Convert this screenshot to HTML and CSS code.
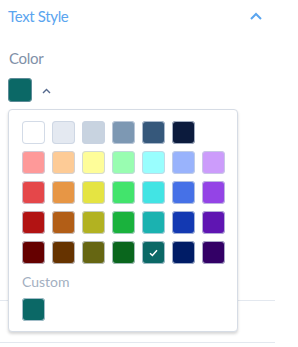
FILE: index.html
```html
<!DOCTYPE html>
<html>
<head>
<meta charset="utf-8">
<link rel="stylesheet" href="styles.css">
</head>
<body>
<div class="panel">
  <div class="section-head">
    <span class="section-title">Text Style</span>
    <svg class="chev-blue" width="12" height="8" viewBox="0 0 12 8"><path d="M1 7 L6 2 L11 7" fill="none" stroke="#5aa5ef" stroke-width="2"/></svg>
  </div>
  <div class="field">
    <div class="field-label">Color</div>
    <div class="picker">
      <span class="swatch current"></span>
      <svg class="chev-small" width="9" height="6" viewBox="0 0 9 6"><path d="M1 5 L4.5 1.5 L8 5" fill="none" stroke="#54698d" stroke-width="1.4"/></svg>
      <div class="popover">
        <div class="grid">
          <span class="swatch" style="background:#ffffff"></span>
          <span class="swatch" style="background:#e4e9f1"></span>
          <span class="swatch" style="background:#c8d3e0"></span>
          <span class="swatch" style="background:#7d98b3"></span>
          <span class="swatch" style="background:#36587b"></span>
          <span class="swatch" style="background:#0c1b3d"></span>
          <span class="empty"></span>
          <span class="swatch" style="background:#fe9999"></span>
          <span class="swatch" style="background:#fdcb96"></span>
          <span class="swatch" style="background:#fefd99"></span>
          <span class="swatch" style="background:#99fdb1"></span>
          <span class="swatch" style="background:#99fefe"></span>
          <span class="swatch" style="background:#99b3fc"></span>
          <span class="swatch" style="background:#cc9cfb"></span>
          <span class="swatch" style="background:#e5474a"></span>
          <span class="swatch" style="background:#e79645"></span>
          <span class="swatch" style="background:#e5e442"></span>
          <span class="swatch" style="background:#42e46c"></span>
          <span class="swatch" style="background:#42e4e4"></span>
          <span class="swatch" style="background:#4671e7"></span>
          <span class="swatch" style="background:#9444e6"></span>
          <span class="swatch" style="background:#b21313"></span>
          <span class="swatch" style="background:#b25e17"></span>
          <span class="swatch" style="background:#b2b221"></span>
          <span class="swatch" style="background:#1ab23d"></span>
          <span class="swatch" style="background:#1bb2b0"></span>
          <span class="swatch" style="background:#1339b2"></span>
          <span class="swatch" style="background:#5f15b2"></span>
          <span class="swatch" style="background:#650000"></span>
          <span class="swatch" style="background:#663300"></span>
          <span class="swatch" style="background:#666612"></span>
          <span class="swatch" style="background:#0a661d"></span>
          <span class="swatch selected" style="background:#0b6866"><svg width="9" height="8" viewBox="0 0 9 8"><path d="M1 4.2 L3.4 6.5 L8 1.2" fill="none" stroke="#fff" stroke-width="1.5"/></svg></span>
          <span class="swatch" style="background:#001c66"></span>
          <span class="swatch" style="background:#330066"></span>
        </div>
        <div class="custom-label">Custom</div>
        <span class="swatch" style="background:#0b6866"></span>
      </div>
    </div>
  </div>
  <div class="divider first"></div>
  <div class="divider second"></div>
</div>
</body>
</html>
```
FILE: styles.css
```css
* { box-sizing: border-box; }
body {
  margin: 0;
  background: #fff;
  font-family: Lato, "Open Sans", sans-serif;
}
.panel {
  width: 275px;
}
.section-head {
  display: flex;
  align-items: center;
  justify-content: space-between;
  height: 30px;
  padding: 0 13px 0 8px;
}
.section-title {
  font-size: 15px;
  letter-spacing: -0.35px;
  color: #5aa5ef;
  line-height: 20px;
  margin-top: 1px;
}
.chev-blue { margin-top: 1px; }
.field {
  padding: 19px 8px 0 8px;
}
.field-label {
  font-size: 15px;
  letter-spacing: -0.3px;
  color: #7f90a8;
  line-height: 18px;
  padding-left: 1px;
}
.picker {
  position: relative;
  display: flex;
  align-items: center;
  gap: 10px;
  margin-top: 11px;
}
.swatch {
  display: flex;
  align-items: center;
  justify-content: center;
  width: 23px;
  height: 23px;
  border-radius: 4px;
  box-shadow: inset 0 0 0 1px rgba(200, 210, 225, 0.8);
}
.swatch.current {
  width: 24px;
  height: 24px;
  background: #0b6866;
  box-shadow: inset 0 0 0 1px rgba(150, 165, 185, 0.6);
}
.chev-small { margin-top: 1px; }
.popover {
  position: absolute;
  left: 0;
  top: 31px;
  width: 230px;
  height: 223px;
  background: #fff;
  border: 1px solid #d6dce5;
  border-radius: 4px;
  box-shadow: 0 2px 3px rgba(0, 0, 0, 0.16);
  padding: 11px 13px;
  z-index: 2;
}
.grid {
  display: grid;
  grid-template-columns: repeat(7, 23px);
  grid-auto-rows: 23px;
  column-gap: 7px;
  row-gap: 7px;
}
.custom-label {
  font-size: 14px;
  color: #a3afc1;
  line-height: 18px;
  margin-top: 9px;
  margin-bottom: 7px;
}
.divider {
  height: 1px;
  background: #e3e8ef;
}
.divider.first { margin-top: 198px; }
.divider.second { margin-top: 41px; }
```
